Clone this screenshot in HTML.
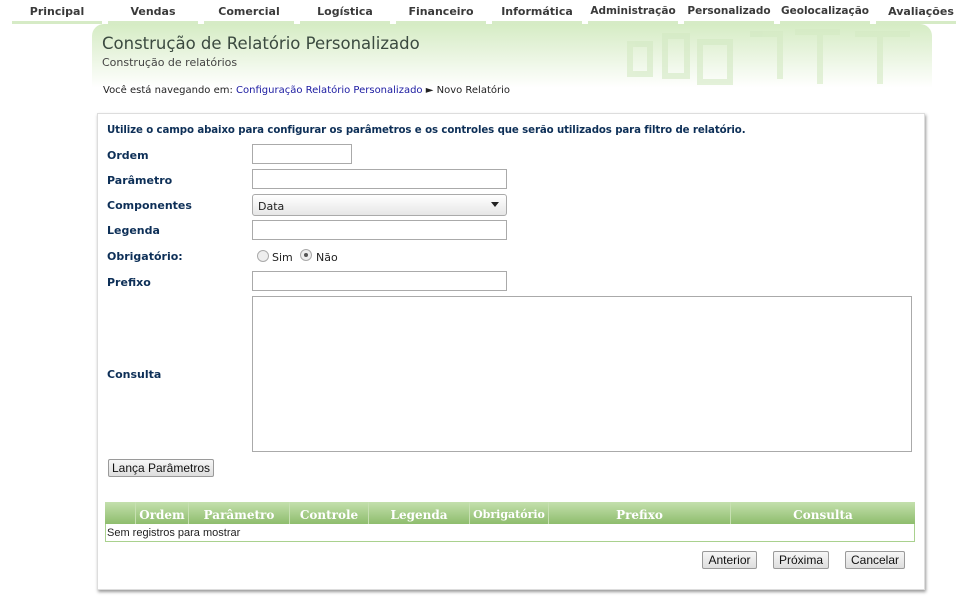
<!DOCTYPE html>
<html><head><meta charset="utf-8"><style>
*{margin:0;padding:0;box-sizing:border-box}
body{width:956px;height:600px;background:#fff;font-family:"DejaVu Sans","Liberation Sans",sans-serif;position:relative;overflow:hidden;font-size:11px;color:#222}
.a{position:absolute}
.nav{top:4px;font-weight:bold;font-size:11px;color:#3a3a3a;width:90px;text-align:center;border-bottom:3px solid #d6ebc6;padding-top:1px;height:20px;white-space:nowrap}
.hdr{left:92px;top:24px;width:840px;height:64px;border-radius:12px 12px 0 0;background:linear-gradient(180deg,#d5ecc4 0%,#e8f4de 45%,#fff 100%)}
.lbl{left:107px;font-weight:bold;color:#0d2f57;font-size:11px}
.in{border:1px solid #aaa;background:#fff;left:252px}
.btn{border:1px solid #9a9a9a;border-radius:2px;background:linear-gradient(#f6f6f6,#dedede);font-family:"Liberation Sans",sans-serif;font-size:12px;text-align:center;color:#111;line-height:16px}
.th{top:502px;height:22px;color:#fff;font-weight:bold;font-size:12px;text-align:center;line-height:26px;border-right:1px solid #c7e0b2;font-family:"DejaVu Serif","Liberation Serif",serif}
</style></head><body>
<div class="a nav" style="left:12px">Principal</div>
<div class="a nav" style="left:108px">Vendas</div>
<div class="a nav" style="left:204px">Comercial</div>
<div class="a nav" style="left:300px">Logística</div>
<div class="a nav" style="left:396px">Financeiro</div>
<div class="a nav" style="left:492px">Informática</div>
<div class="a nav" style="left:588px;font-size:10.5px">Administração</div>
<div class="a nav" style="left:684px;font-size:10.5px">Personalizado</div>
<div class="a nav" style="left:780px;font-size:10.5px">Geolocalização</div>
<div class="a nav" style="left:876px;width:90px">Avaliações</div>
<div class="a hdr"></div>
<svg class="a" style="left:580px;top:24px" width="352" height="64"><g fill="none" stroke="#d3e9c3" stroke-width="6" opacity=".6"><rect x="50" y="20" width="20" height="30"/><rect x="85" y="12" width="22" height="40"/><rect x="120" y="18" width="30" height="40"/><path d="M170 10 L200 10 L200 55 M215 8 L260 8 M240 8 L240 60 M275 10 L330 10 M300 10 L300 60"/></g></svg>
<div class="a" style="left:102px;top:34px;font-size:16.5px;color:#3b4a40">Construção de Relatório Personalizado</div>
<div class="a" style="left:102px;top:56px;font-size:11px;color:#444">Construção de relatórios</div>
<div class="a" style="left:103px;top:85px;font-size:10px;color:#222">Você está navegando em: <span style="color:#1a1aa0">Configuração Relatório Personalizado</span> ► Novo Relatório</div>
<div class="a" style="left:97px;top:113px;width:828px;height:477px;border:1px solid #ddd;box-shadow:1px 2px 3px #999"></div>
<div class="a lbl" style="top:125px;font-size:10.2px;letter-spacing:-0.1px">Utilize o campo abaixo para configurar os parâmetros e os controles que serão utilizados para filtro de relatório.</div>
<div class="a lbl" style="top:149px">Ordem</div>
<div class="a lbl" style="top:174px">Parâmetro</div>
<div class="a lbl" style="top:199px">Componentes</div>
<div class="a lbl" style="top:224px">Legenda</div>
<div class="a lbl" style="top:250px">Obrigatório:</div>
<div class="a lbl" style="top:276px">Prefixo</div>
<div class="a lbl" style="top:368px">Consulta</div>
<div class="a in" style="top:144px;width:100px;height:20px"></div>
<div class="a in" style="top:169px;width:255px;height:20px"></div>
<div class="a in" style="top:194px;width:255px;height:22px;border-radius:3px;background:linear-gradient(#fff,#e6e6e6);padding:5px 0 0 5px;font-size:11px">Data<span class="a" style="right:7px;top:7px;border:4px solid transparent;border-top:5px solid #222;border-bottom:0"></span></div>
<div class="a in" style="top:220px;width:255px;height:20px"></div>
<div class="a" style="left:257px;top:250px;width:12px;height:12px;border-radius:50%;border:1px solid #aaa;background:#eee"></div>
<div class="a" style="left:272px;top:251px;font-size:11px">Sim</div>
<div class="a" style="left:300px;top:249px;width:12px;height:12px;border-radius:50%;border:1px solid #aaa;background:#eee"><div class="a" style="left:3px;top:3px;width:4px;height:4px;border-radius:50%;background:#555"></div></div>
<div class="a" style="left:316px;top:251px;font-size:11px">Não</div>
<div class="a in" style="top:271px;width:255px;height:20px"></div>
<div class="a in" style="top:296px;width:660px;height:156px"></div>
<div class="a btn" style="left:108px;top:459px;width:106px;height:18px">Lança Parâmetros</div>
<div class="a" style="left:105px;top:502px;width:810px;height:40px;border:1px solid #a9d18e"></div>
<div class="a" style="left:105px;top:502px;width:810px;height:22px;background:linear-gradient(#c4e0ad,#8ebd6d)"></div>
<div class="a th" style="left:105px;width:31px"></div>
<div class="a th" style="left:136px;width:53px">Ordem</div>
<div class="a th" style="left:189px;width:101px">Parâmetro</div>
<div class="a th" style="left:290px;width:79px">Controle</div>
<div class="a th" style="left:369px;width:101px">Legenda</div>
<div class="a th" style="left:470px;width:79px;font-size:11px">Obrigatório</div>
<div class="a th" style="left:549px;width:182px">Prefixo</div>
<div class="a th" style="left:731px;width:184px;border:0">Consulta</div>
<div class="a" style="left:107px;top:527px;font-family:'Liberation Sans',sans-serif;font-size:11px">Sem registros para mostrar</div>
<div class="a btn" style="left:702px;top:551px;width:55px;height:18px">Anterior</div>
<div class="a btn" style="left:773px;top:551px;width:56px;height:18px">Próxima</div>
<div class="a btn" style="left:845px;top:551px;width:60px;height:18px">Cancelar</div>
</body></html>
